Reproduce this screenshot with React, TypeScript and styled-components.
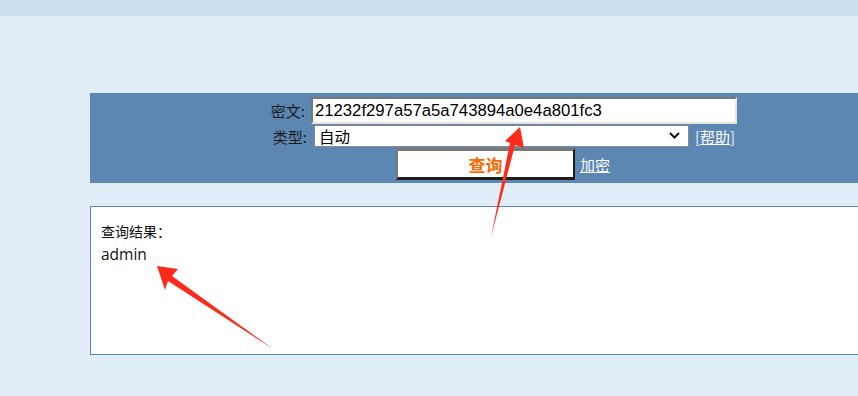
import styled, { createGlobalStyle } from "styled-components";

const GlobalStyle = createGlobalStyle`
  html, body {
    margin: 0;
    padding: 0;
    background: #e1eef7;
    overflow: hidden;
  }
  body {
    font-family: "Noto Sans CJK SC", "Noto Sans", sans-serif;
  }
`;

const Page = styled.div`
  position: relative;
  width: 858px;
  height: 396px;
  overflow: hidden;
`;

const TopStrip = styled.div`
  height: 16px;
  background: #cbe0ee;
`;

const Main = styled.div`
  padding: 77px 0 0 90px;
  display: flex;
  flex-direction: column;
  gap: 23px;
`;

const Panel = styled.form`
  width: 826px;
  background: #5b87b2;
  padding: 4px 0 3px;
  display: flex;
  flex-direction: column;
  align-items: center;
  gap: 1px;
`;

const Row = styled.div<{ $gap?: number }>`
  display: flex;
  align-items: center;
  gap: ${(p) => p.$gap ?? 6}px;
`;

const Label = styled.label`
  font-size: 15px;
  color: #1b1b1b;
  width: 36px;
  white-space: nowrap;
  text-align: right;
`;

const TextInput = styled.input`
  box-sizing: border-box;
  width: 426px;
  height: 27px;
  border-style: solid;
  border-width: 2px;
  border-color: #777 #e4e4e4 #e4e4e4 #777;
  padding: 0 2px;
  font-family: "Liberation Sans", Arial, sans-serif;
  font-size: 16.7px;
  color: #000;
  background: #fff;
  outline: none;
`;

const SelectWrap = styled.div`
  position: relative;
  margin-left: 1px;
  display: flex;
`;

const Select = styled.select`
  box-sizing: border-box;
  appearance: none;
  width: 375px;
  height: 22px;
  border: 1px solid #8a8a8a;
  font-family: "Noto Sans CJK SC", sans-serif;
  font-size: 15.5px;
  line-height: 20px;
  padding: 0 4px;
  background: #fff;
  color: #000;
  outline: none;
`;

const Chevron = styled.svg`
  position: absolute;
  right: 9px;
  top: 7px;
  pointer-events: none;
`;

const Link = styled.a`
  color: #fff;
  font-size: 15px;
  text-decoration: underline;
`;

const Help = styled.span`
  color: #e8f0ff;
  font-size: 15px;
`;

const QueryButton = styled.button`
  box-sizing: border-box;
  width: 179px;
  height: 32px;
  background: #fff;
  border-style: solid;
  border-width: 3px 2px 3px 2px;
  border-color: #787878 #1d1d1d #1d1d1d #787878;
  color: #ff6600;
  font-family: "Noto Sans CJK SC", sans-serif;
  font-weight: bold;
  font-size: 17px;
  padding: 0;
`;

const ResultBox = styled.div`
  box-sizing: border-box;
  width: 826px;
  height: 149px;
  background: #fff;
  border: 1px solid #5b87b2;
  padding: 14px 10px;
  font-family: "Open Sans", "Noto Sans CJK SC", sans-serif;
  font-size: 14px;
  line-height: 22px;
  color: #111;
`;

const ResultValue = styled.div`
  font-size: 15.5px;
`;

const Overlay = styled.svg`
  position: absolute;
  left: 0;
  top: 0;
  pointer-events: none;
`;

export default function App() {
  return (
    <Page>
      <GlobalStyle />
      <TopStrip />
      <Main>
        <Panel onSubmit={(e) => e.preventDefault()}>
          <Row>
            <Label>密文:</Label>
            <TextInput defaultValue="21232f297a57a5a743894a0e4a801fc3" />
          </Row>
          <Row>
            <Label>类型:</Label>
            <SelectWrap>
              <Select defaultValue="auto">
                <option value="auto">自动</option>
              </Select>
              <Chevron width="11" height="7" viewBox="0 0 11 7">
                <path d="M1 1l4.5 4.5L10 1" fill="none" stroke="#111" strokeWidth="2" />
              </Chevron>
            </SelectWrap>
            <Help>
              [<Link href="#">帮助</Link>]
            </Help>
          </Row>
          <Row $gap={5}>
            <QueryButton type="submit">查询</QueryButton>
            <Link href="#">加密</Link>
          </Row>
        </Panel>
        <ResultBox>
          <div>查询结果：</div>
          <ResultValue>admin</ResultValue>
        </ResultBox>
      </Main>
      <Overlay width="858" height="396">
        <polygon
          fill="#ff2a1a"
          points="520,127 524,148 515,145 491,237 510,143 505,141"
        />
        <polygon
          fill="#ff2a1a"
          points="157,266 178,269 172,276 273,349 168,281 165,290"
        />
      </Overlay>
    </Page>
  );
}
